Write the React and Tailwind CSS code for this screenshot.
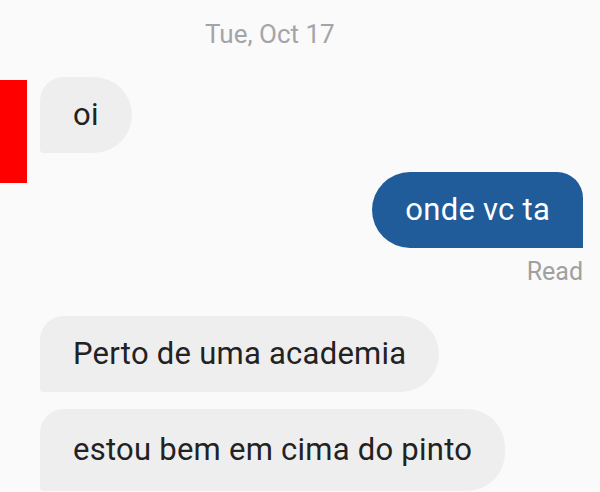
import React from 'react';

const font = { fontFamily: 'Roboto, "Noto Sans", sans-serif' };

// bolha recebida
const Received = ({ children, className = '' }) => (
  <div
    className={`h-[76px] flex items-center px-[33px] bg-[#eeeeee] text-[#222222] text-[31px] tracking-[0.25px] rounded-r-[38px] rounded-tl-[24px] rounded-bl-[4px] ${className}`}
  >
    {children}
  </div>
);

const App = () => {
  return (
    <div className="w-[600px] h-[492px] overflow-hidden bg-[#fafafa] flex flex-col" style={font}>
      {/* data */}
      <div className="pt-[17px] pl-[205px] text-[26px] text-[#a4a4a8] leading-[34px]">
        Tue, Oct 17
      </div>

      {/* primeira mensagem (avatar tapado) */}
      <div className="relative flex items-start mt-[26px] pl-[40px]">
        <div className="absolute left-0 top-[3px] w-[27px] h-[103px] bg-[#ff0000]" />
        <Received>oi</Received>
      </div>

      {/* mensagem enviada */}
      <div className="flex flex-col items-end pr-[17px] mt-[19px]">
        <div className="h-[76px] flex items-center px-[33px] bg-[#1f5c99] text-white text-[31px] tracking-[0.25px] rounded-l-[38px] rounded-tr-[26px] rounded-br-none">
          onde vc ta
        </div>
        <div className="text-[25px] text-[#a0a0a0] leading-[30px] mt-[9px]">Read</div>
      </div>

      {/* respostas */}
      <div className="flex flex-col items-start pl-[40px] mt-[29px] gap-[17px]">
        <Received>Perto de uma academia</Received>
        <Received className="h-[82px]">estou bem em cima do pinto</Received>
      </div>
    </div>
  );
};

export default App;
